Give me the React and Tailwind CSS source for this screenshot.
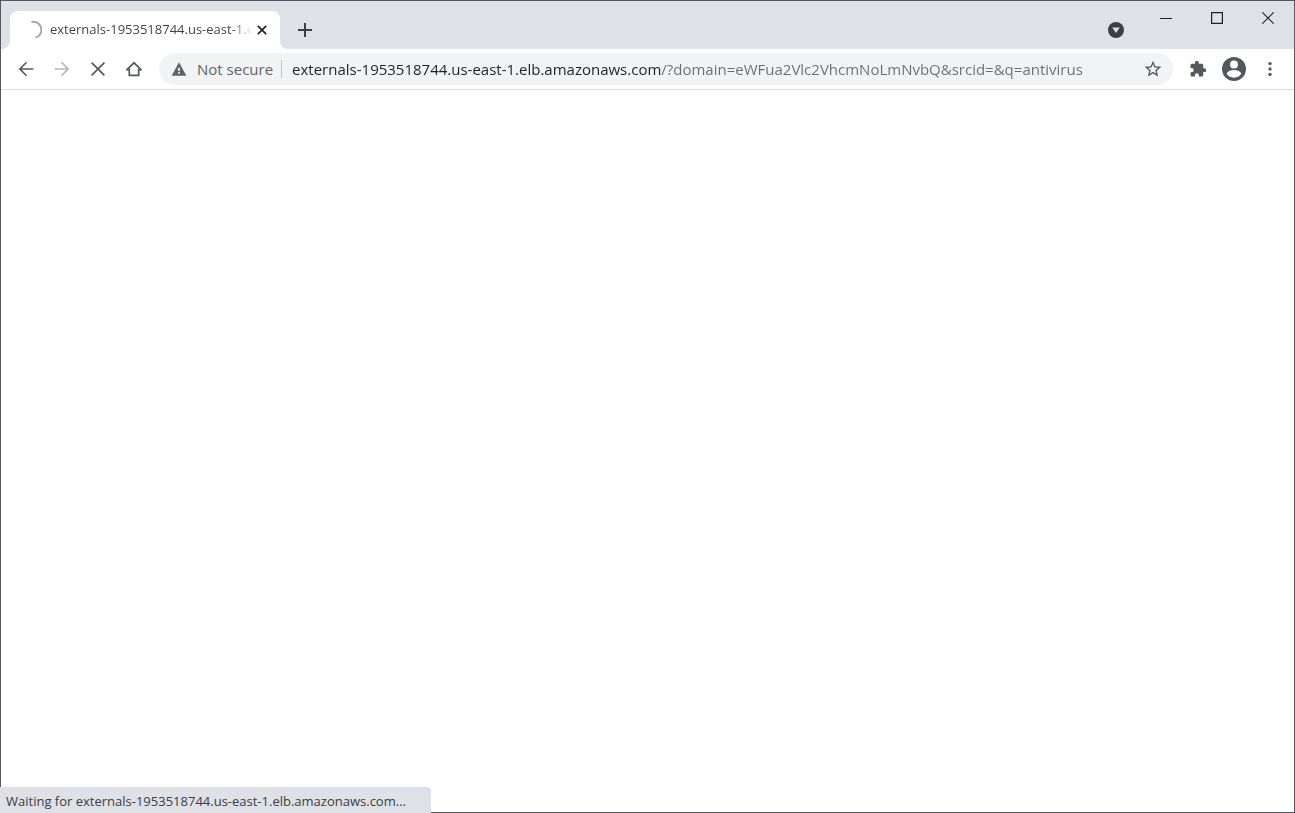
import React, { useState } from "react";

const URL_TEXT =
  "externals-1953518744.us-east-1.elb.amazonaws.com/?domain=eWFua2Vlc2VhcmNoLmNvbQ&srcid=&q=antivirus";

function Icon({ d, className }) {
  return (
    <svg viewBox="0 0 24 24" className={className} fill="currentColor" aria-hidden="true">
      <path d={d} />
    </svg>
  );
}

function ToolButton({ label, disabled, className = "", children }) {
  return (
    <button
      type="button"
      aria-label={label}
      disabled={disabled}
      className={`flex h-8 w-9 shrink-0 items-center justify-center ${className}`}
    >
      {children}
    </button>
  );
}

function TabFoot({ className }) {
  return (
    <svg viewBox="0 0 8 8" className={`h-2 w-2 shrink-0 self-end text-white ${className}`} aria-hidden="true">
      <path d="M8 0v8H0a8 8 0 0 0 8-8z" fill="currentColor" />
    </svg>
  );
}

function TabStrip() {
  return (
    <header className="flex h-12 items-stretch bg-[#dee1e6]">
      <TabFoot className="ml-px" />
      <div className="mt-[10px] flex w-[270px] items-center rounded-t-lg bg-white pr-2">
        <svg viewBox="0 0 18 18" className="ml-[14px] h-[18px] w-[18px] shrink-0" fill="none" aria-label="Loading">
          <path d="M7.4 1.100A8 8 0 0 1 11.400 16.600" stroke="#a3a6ab" strokeWidth="2" />
        </svg>
        <span className="ml-2 flex-1 overflow-hidden whitespace-nowrap bg-linear-to-r from-[#3c4043] from-90% to-[#3c404300] bg-clip-text text-[13px] text-transparent">
          externals-1953518744.us-east-1.elb.amazonaws.com
        </span>
        <button type="button" aria-label="Close tab" className="flex h-5 w-5 items-center justify-center">
          <svg viewBox="0 0 10 10" className="h-[10px] w-[10px]" stroke="#202124" strokeWidth="1.7" aria-hidden="true">
            <path d="M.8.8l8.4 8.4M9.2.8L.8 9.2" />
          </svg>
        </button>
      </div>
      <TabFoot className="-scale-x-100" />
      <button type="button" aria-label="New tab" className="mt-[10px] ml-[3px] flex w-7 items-center justify-center">
        <svg viewBox="0 0 14 14" className="h-[14px] w-[14px]" stroke="#3c4043" strokeWidth="2" aria-hidden="true">
          <path d="M7 0v14M0 7h14" />
        </svg>
      </button>
      <div className="flex-1" />
      <button type="button" aria-label="Search tabs" className="mt-[10px] flex w-7 items-center justify-center">
        <svg viewBox="0 0 16 16" className="h-4 w-4" aria-hidden="true">
          <circle cx="8" cy="8" r="8" fill="#3c4043" />
          <path d="M4.200 5.600h7.600L8 11z" fill="#dee1e6" />
        </svg>
      </button>
      <div className="ml-[10px] flex h-[34px] text-[#202124]">
        <button type="button" aria-label="Minimize" className="flex w-[51px] items-center justify-center">
          <svg viewBox="0 0 12 12" className="h-3 w-3" stroke="currentColor" aria-hidden="true">
            <path d="M0 6.5h12" />
          </svg>
        </button>
        <button type="button" aria-label="Maximize" className="flex w-[51px] items-center justify-center">
          <svg viewBox="0 0 12 12" className="h-3 w-3" stroke="currentColor" strokeWidth="1.2" fill="none" aria-hidden="true">
            <path d="M.6.6h10.8v10.8H.6z" />
          </svg>
        </button>
        <button type="button" aria-label="Close window" className="flex w-[52px] items-center justify-center">
          <svg viewBox="0 0 12 12" className="h-3 w-3" stroke="currentColor" strokeWidth="1.1" aria-hidden="true">
            <path d="M.3.3l11.4 11.4M11.7.3L.3 11.7" />
          </svg>
        </button>
      </div>
    </header>
  );
}

function Toolbar() {
  const [url, setUrl] = useState(URL_TEXT);
  return (
    <nav className="flex h-[41px] items-center border-b border-[#dcdee1] bg-white pr-[6px] pl-[7px] text-[#55585c]">
      <ToolButton label="Back">
        <Icon className="h-[22px] w-[22px]" d="M20 11.1H7.4l5.8-5.8L12 4l-8 8 8 8 1.2-1.3-5.8-5.8H20z" />
      </ToolButton>
      <ToolButton label="Forward" disabled className="text-[#b5b7ba]">
        <Icon className="h-[22px] w-[22px]" d="M4 11.1h12.6l-5.8-5.8L12 4l8 8-8 8-1.2-1.3 5.8-5.8H4z" />
      </ToolButton>
      <ToolButton label="Stop loading">
        <svg viewBox="0 0 14 14" className="h-[14px] w-[14px]" stroke="currentColor" strokeWidth="1.7" aria-hidden="true">
          <path d="M.6.6l12.8 12.8M13.4.6L.6 13.4" />
        </svg>
      </ToolButton>
      <ToolButton label="Home">
        <svg viewBox="0 0 16 16" className="h-4 w-4" stroke="currentColor" strokeWidth="1.7" fill="none" aria-hidden="true">
          <path d="M1 8.6L8 1.800l7 6.800h-2.300v5.700H3.300v-5.700z" />
        </svg>
      </ToolButton>
      <div className="ml-[7px] flex h-8 min-w-0 flex-1 items-center rounded-full bg-[#f1f3f4] pr-1 pl-3">
        <button type="button" className="flex items-center text-[15px] whitespace-nowrap text-[#5f6368]">
          <Icon className="mr-[10px] h-4 w-4" d="M1 22h22L12 2 1 22zm12.3-3h-2.6v-2.4h2.6V19zm0-4h-2.6v-5h2.6v5z" />
          Not secure
        </button>
        <span className="mr-[10px] ml-2 h-[18px] w-px shrink-0 bg-[#c0c3c7]" />
        <input
          type="text"
          aria-label="Address and search bar"
          spellCheck="false"
          value={url}
          onChange={(e) => setUrl(e.target.value)}
          className="h-6 min-w-0 flex-1 bg-linear-to-r from-[#202124] from-[370px] to-[#6a6e73] to-[370px] bg-clip-text text-[15px] text-transparent caret-black outline-none"
        />
        <ToolButton label="Bookmark this tab" className="-mr-[2px]">
          <Icon
            className="h-5 w-5"
            d="M22 9.24l-7.19-.62L12 2 9.19 8.63 2 9.24l5.46 4.73L5.82 21 12 17.27 18.18 21l-1.63-7.03L22 9.24zM12 15.4l-3.76 2.27 1-4.28-3.32-2.88 4.38-.38L12 6.1l1.71 4.04 4.38.38-3.32 2.88 1 4.28L12 15.4z"
          />
        </ToolButton>
      </div>
      <ToolButton label="Extensions" className="ml-[7px]">
        <Icon
          className="h-[18px] w-[18px]"
          d="M20.5 11H19V7c0-1.1-.9-2-2-2h-4V3.5a2.5 2.5 0 0 0-5 0V5H4c-1.1 0-2 .9-2 2v3.8h1.5a2.7 2.7 0 0 1 0 5.4H2V20c0 1.1.9 2 2 2h3.8v-1.5a2.7 2.7 0 0 1 5.4 0V22H17c1.1 0 2-.9 2-2v-4h1.5a2.5 2.5 0 0 0 0-5z"
        />
      </ToolButton>
      <ToolButton label="Profile">
        <svg viewBox="2 2 20 20" className="h-6 w-6" fill="currentColor" aria-hidden="true">
          <path d="M12 2a10 10 0 1 0 0 20 10 10 0 0 0 0-20zm0 3a3.3 3.3 0 1 1 0 6.6A3.3 3.3 0 0 1 12 5zm0 14.2a7.2 7.2 0 0 1-6-3.2c0-2 4-3.1 6-3.1s6 1.100 6 3.100a7.200 7.200 0 0 1-6 3.200z" />
        </svg>
      </ToolButton>
      <ToolButton label="Menu">
        <svg viewBox="0 0 4 16" className="h-4 w-1" fill="currentColor" aria-hidden="true">
          <circle cx="2" cy="2.600" r="1.700" />
          <circle cx="2" cy="8" r="1.700" />
          <circle cx="2" cy="13.400" r="1.700" />
        </svg>
      </ToolButton>
    </nav>
  );
}

export default function App() {
  return (
    <div className="relative flex min-h-screen flex-col border border-[#55585f] bg-white font-['Open_Sans','Noto_Sans',sans-serif]">
      <TabStrip />
      <Toolbar />
      <main className="flex-1" />
      <div
        role="status"
        className="absolute -bottom-px -left-px flex w-[431px] max-w-full items-center rounded-tr bg-[#dee1e6] pt-1 pb-0.5 pl-[6px] text-[13px] leading-5 whitespace-nowrap text-[#3c4043]"
      >
        Waiting for externals-1953518744.us-east-1.elb.amazonaws.com...
      </div>
    </div>
  );
}
